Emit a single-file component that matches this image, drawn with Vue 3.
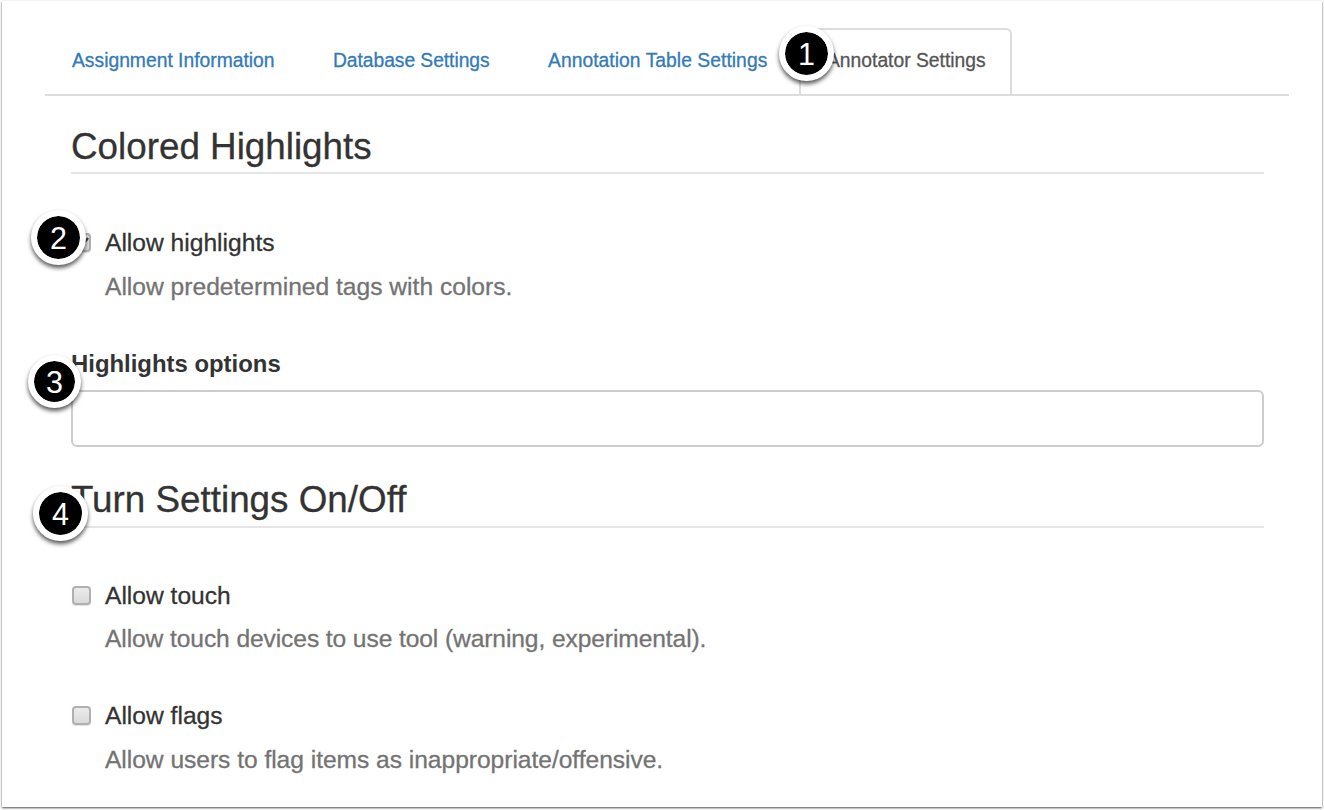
<script setup>
const tabs = [
  { label: 'Assignment Information', cls: 'tab-info' },
  { label: 'Database Settings', cls: 'tab-db' },
  { label: 'Annotation Table Settings', cls: 'tab-table' },
  { label: 'Annotator Settings', cls: 'tab-annotator active' },
]

const toggles = [
  { id: 'touch', label: 'Allow touch', help: 'Allow touch devices to use tool (warning, experimental).' },
  { id: 'flags', label: 'Allow flags', help: 'Allow users to flag items as inappropriate/offensive.' },
]

const markers = [
  { n: 1, x: 806.5, y: 53.5, r: 27.5 },
  { n: 2, x: 58.5, y: 237.5, r: 27.5 },
  { n: 3, x: 54.5, y: 381.5, r: 26.5 },
  { n: 4, x: 60.5, y: 513.5, r: 27.5 },
]
</script>

<template>
  <div class="stage">
    <main class="panel">
      <nav class="tabs">
        <a v-for="t in tabs" :key="t.label" class="tab" :class="t.cls">{{ t.label }}</a>
      </nav>

      <section class="content">
        <h2 class="heading">Colored Highlights</h2>
        <div class="option first">
          <span class="box checked">
            <svg viewBox="0 0 18 18" width="18" height="18"><path d="M3 8l4 4 7-9" fill="none" stroke="#444" stroke-width="2.4" /></svg>
          </span>
          <div>
            <div class="label">Allow highlights</div>
            <div class="help">Allow predetermined tags with colors.</div>
          </div>
        </div>

        <div class="field-label">Highlights options</div>
        <div class="field"></div>

        <h2 class="heading second">Turn Settings On/Off</h2>
        <div v-for="o in toggles" :key="o.id" class="option" :class="o.id">
          <span class="box"></span>
          <div>
            <div class="label">{{ o.label }}</div>
            <div class="help">{{ o.help }}</div>
          </div>
        </div>
      </section>
    </main>

    <div
      v-for="m in markers"
      :key="m.n"
      class="marker"
      :style="{ left: m.x - m.r + 'px', top: m.y - m.r + 'px', width: m.r * 2 + 'px', height: m.r * 2 + 'px' }"
    >
      <span class="digit">{{ m.n }}</span>
    </div>
  </div>
</template>

<style>
body {
  background: #fff;
  overflow: hidden;
}
</style>

<style scoped>
.stage {
  position: relative;
  width: 1324px;
  height: 810px;
  box-sizing: border-box;
  padding: 1px 2px 3px;
  overflow: hidden;
  font-family: "Liberation Sans", Arial, sans-serif;
  color: #333;
  -webkit-text-stroke-width: 0.3px;
}
.panel {
  height: 806px;
  box-sizing: border-box;
  padding: 27px 33px 0 43px;
  background: #fff;
  box-shadow: 0 1px 2px rgba(0, 0, 0, 0.7);
}
.tabs {
  display: flex;
  height: 68px;
  box-sizing: border-box;
  border-bottom: 2px solid #ddd;
}
.tab {
  box-sizing: border-box;
  height: 66px;
  padding: 0 27px;
  line-height: 66px;
  font-size: 19.3px;
  color: #337ab7;
  white-space: nowrap;
}
.tab-info { width: 261px; }
.tab-db {
  width: 215px;
  letter-spacing: -0.06px;
}
.tab-table {
  width: 278px;
  letter-spacing: 0.04px;
}
.tab-annotator {
  width: 213px;
  padding: 0 26px;
  line-height: 62px;
}
.active {
  color: #555;
  border: 2px solid #ddd;
  border-bottom: 0;
  border-radius: 6px 6px 0 0;
}
.content {
  padding: 0 25px 0 26px;
}
.heading {
  margin: 0;
  height: 78px;
  box-sizing: border-box;
  padding-top: 30px;
  border-bottom: 2px solid #e5e5e5;
  font-size: 36.8px;
  line-height: 42px;
  font-weight: 400;
  white-space: nowrap;
}
.second {
  height: 81px;
  padding-top: 32px;
}
.option {
  display: flex;
  height: 120px;
}
.option.first {
  height: 122px;
  padding-top: 54px;
  box-sizing: content-box;
  margin-bottom: -1px;
}
.option.touch {
  padding-top: 53px;
}
.box {
  box-sizing: border-box;
  flex: none;
  width: 19px;
  height: 19px;
  margin: 5px 14px 0 1px;
  border: 2px solid #b0b0b0;
  border-radius: 4px;
  background: linear-gradient(#ebebeb, #dadada);
  box-shadow: 0 1px 1px rgba(0, 0, 0, 0.12);
}
.box svg {
  display: block;
}
.label,
.help {
  font-size: 24.6px;
  line-height: 30px;
  white-space: nowrap;
}
.help {
  margin-top: 14px;
  color: #737373;
}
.touch .help {
  margin-top: 13px;
  letter-spacing: -0.1px;
}
.flags .help {
  letter-spacing: -0.035px;
}
.field-label {
  font-size: 23.9px;
  font-weight: 700;
  line-height: 30px;
  -webkit-text-stroke-width: 0;
}
.field {
  box-sizing: border-box;
  height: 57px;
  margin-top: 11px;
  border: 2px solid #ccc;
  border-radius: 6px;
}
.marker {
  position: absolute;
  box-sizing: border-box;
  display: flex;
  align-items: center;
  justify-content: center;
  border: 6px solid #fff;
  border-radius: 50%;
  background: #000;
  background-clip: padding-box;
  box-shadow: 0 3px 4px rgba(0, 0, 0, 0.65);
}
.digit {
  font-size: 30.5px;
  line-height: 34px;
  color: #fff;
  -webkit-text-stroke-width: 0;
}
</style>
